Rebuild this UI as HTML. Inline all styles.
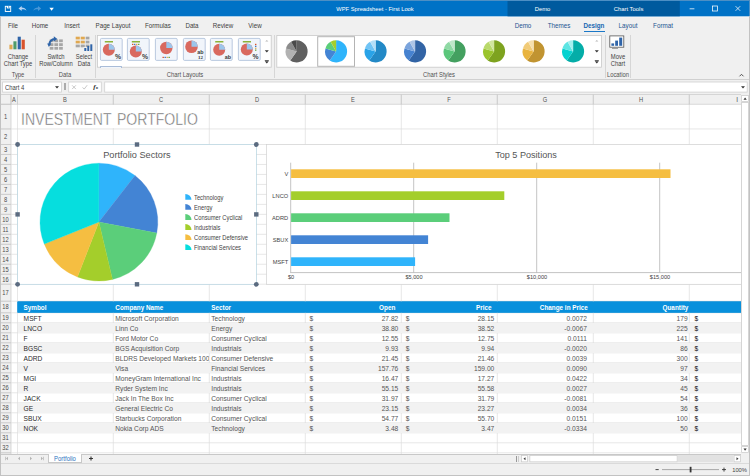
<!DOCTYPE html><html><head><meta charset="utf-8"><title>WPF Spreadsheet - First Look</title><style>
*{margin:0;padding:0;box-sizing:border-box}
html,body{width:750px;height:476px;overflow:hidden;background:#f0f0f0}
body{position:relative;font-family:"Liberation Sans",sans-serif;font-size:6.2px;color:#404040;line-height:1}
.a{position:absolute}
.t{position:absolute;white-space:nowrap;line-height:8px;height:8px}
.c{text-align:center}
.r{text-align:right}
.b{font-weight:bold}
svg{position:absolute;overflow:visible}
</style></head><body>
<svg style="left:0;top:0" width="750" height="20"><rect x="0" y="16" width="750" height="1.400" fill="#f8f8f8"/><rect x="0" y="0" width="750" height="16.300" fill="#0072c6"/><rect x="507.500" y="0" width="172.300" height="16.300" fill="#005a9e"/></svg>
<div class="a" style="left:0.00px;top:0.00px;width:750.00px;height:0.80px;background:#4d8fc4;"></div>
<div class="t c" style="left:275.30px;top:4.60px;width:200.00px;color:#fff;font-size:6.250px;transform:scaleX(0.920)">WPF Spreadsheet - First Look</div>
<div class="t c" style="left:507.50px;top:4.60px;width:70.00px;color:#fff;font-size:5.900px">Demo</div>
<div class="t c" style="left:588.50px;top:4.60px;width:80.00px;color:#fff;font-size:5.900px">Chart Tools</div>
<svg style="left:680px;top:0" width="70" height="17"><g stroke="#fff" stroke-width="0.75" fill="none"><path d="M9.600 8.800h4.800"/><rect x="32.400" y="6" width="5.200" height="5"/><path d="M55.600 6.200l4.600 4.600M60.200 6.200l-4.600 4.600"/></g></svg>
<svg style="left:0;top:0" width="70" height="17"><rect x="5.300" y="6.300" width="5.400" height="5.200" fill="none" stroke="#fff" stroke-width="0.9"/><rect x="6.800" y="6" width="3" height="2.400" fill="#fff"/><rect x="8.300" y="6.300" width="0.800" height="1.400" fill="#0072c6"/><g fill="#b7d3f2"><path d="M18.500 8.500l3.200-2.500v1.500c2.200 0 4 1 4.800 3.300-1.300-1.200-2.800-1.600-4.800-1.500v1.700z"/><path d="M41.200 8.500l-3.200-2.500v1.500c-2.200 0-4 1-4.800 3.300 1.300-1.200 2.800-1.600 4.800-1.500v1.700z" opacity=".4"/></g><path d="M49.400 7.700h4.400l-2.200 3z" fill="#fff"/></svg>
<div class="t c" style="left:-17.00px;top:21.50px;width:60.00px;font-size:6.600px;transform:scaleX(0.940)">File</div>
<div class="t c" style="left:10.30px;top:21.50px;width:60.00px;font-size:6.600px;transform:scaleX(0.940)">Home</div>
<div class="t c" style="left:42.00px;top:21.50px;width:60.00px;font-size:6.600px;transform:scaleX(0.940)">Insert</div>
<div class="t c" style="left:82.50px;top:21.50px;width:60.00px;font-size:6.600px;transform:scaleX(0.940)">Page Layout</div>
<div class="t c" style="left:128.00px;top:21.50px;width:60.00px;font-size:6.600px;transform:scaleX(0.940)">Formulas</div>
<div class="t c" style="left:162.30px;top:21.50px;width:60.00px;font-size:6.600px;transform:scaleX(0.940)">Data</div>
<div class="t c" style="left:193.00px;top:21.50px;width:60.00px;font-size:6.600px;transform:scaleX(0.940)">Review</div>
<div class="t c" style="left:224.50px;top:21.50px;width:60.00px;font-size:6.600px;transform:scaleX(0.940)">View</div>
<div class="t c" style="left:493.30px;top:21.70px;width:60.00px;color:#1d5590;font-size:6.600px;transform:scaleX(0.950)">Demo</div>
<div class="t c" style="left:529.00px;top:21.70px;width:60.00px;color:#1d5590;font-size:6.600px;transform:scaleX(0.950)">Themes</div>
<div class="t c b" style="left:564.00px;top:21.70px;width:60.00px;color:#1566b0;font-size:6.600px;transform:scaleX(0.950)">Design</div>
<div class="t c" style="left:598.30px;top:21.70px;width:60.00px;color:#1d5590;font-size:6.600px;transform:scaleX(0.950)">Layout</div>
<div class="t c" style="left:633.00px;top:21.70px;width:60.00px;color:#1d5590;font-size:6.600px;transform:scaleX(0.950)">Format</div>
<div class="a" style="left:584.00px;top:30.60px;width:20.50px;height:1.00px;background:#1b78c8;"></div>
<div class="a" style="left:35.40px;top:35.00px;width:0.60px;height:42.50px;background:#d6d6d6;"></div>
<div class="a" style="left:95.40px;top:35.00px;width:0.60px;height:42.50px;background:#d6d6d6;"></div>
<div class="a" style="left:604.80px;top:35.00px;width:0.60px;height:42.50px;background:#d6d6d6;"></div>
<div class="a" style="left:629.60px;top:35.00px;width:0.60px;height:42.50px;background:#d6d6d6;"></div>
<div class="a" style="left:273.60px;top:35.00px;width:0.60px;height:42.50px;background:#d6d6d6;"></div>
<div class="a" style="left:0.00px;top:79.00px;width:750.00px;height:0.80px;background:#d0d0d0;"></div>
<div class="t c" style="left:-22.50px;top:70.50px;width:80.00px;color:#505050;font-size:6.500px;transform:scaleX(0.900)">Type</div>
<div class="t c" style="left:25.30px;top:70.50px;width:80.00px;color:#505050;font-size:6.500px;transform:scaleX(0.900)">Data</div>
<div class="t c" style="left:144.50px;top:70.50px;width:80.00px;color:#505050;font-size:6.500px;transform:scaleX(0.900)">Chart Layouts</div>
<div class="t c" style="left:399.00px;top:70.50px;width:80.00px;color:#505050;font-size:6.500px;transform:scaleX(0.900)">Chart Styles</div>
<div class="t c" style="left:577.50px;top:70.50px;width:80.00px;color:#505050;font-size:6.500px;transform:scaleX(0.900)">Location</div>
<svg style="left:738px;top:72px" width="8" height="6"><path d="M1.500 4.300l2-2 2 2" stroke="#404040" stroke-width="0.9" fill="none"/></svg>
<div class="t c" style="left:-12.50px;top:52.60px;width:60.00px;font-size:6.500px;transform:scaleX(0.900)">Change</div>
<div class="t c" style="left:-12.50px;top:59.60px;width:60.00px;font-size:6.500px;transform:scaleX(0.900)">Chart Type</div>
<div class="t c" style="left:25.50px;top:52.60px;width:60.00px;font-size:6.500px;transform:scaleX(0.900)">Switch</div>
<div class="t c" style="left:25.50px;top:59.60px;width:60.00px;font-size:6.500px;transform:scaleX(0.900)">Row/Column</div>
<div class="t c" style="left:53.70px;top:52.60px;width:60.00px;font-size:6.500px;transform:scaleX(0.900)">Select</div>
<div class="t c" style="left:53.70px;top:59.60px;width:60.00px;font-size:6.500px;transform:scaleX(0.900)">Data</div>
<div class="t c" style="left:587.50px;top:52.60px;width:60.00px;font-size:6.500px;transform:scaleX(0.900)">Move</div>
<div class="t c" style="left:587.50px;top:59.60px;width:60.00px;font-size:6.500px;transform:scaleX(0.900)">Chart</div>
<svg style="left:9px;top:36px" width="17" height="15"><rect x="0.400" y="8.700" width="3.100" height="4.600" fill="#e0a850"/><rect x="4.400" y="5.300" width="3.100" height="8" fill="#4f9b6a"/><rect x="8.700" y="0.700" width="3.100" height="12.600" fill="#2f64a8"/><rect x="12.600" y="3.700" width="3.200" height="9.600" fill="#d9532c"/></svg>
<svg style="left:47px;top:36px" width="18" height="15"><rect x="2.7" y="3.4" width="3.700" height="2.800" fill="#a6a6a6"/><rect x="7.4" y="3.4" width="3.700" height="2.800" fill="#a6a6a6"/><rect x="12.1" y="3.4" width="3.700" height="2.800" fill="#a6a6a6"/><rect x="2.7" y="7.2" width="3.700" height="2.800" fill="#a6a6a6"/><rect x="7.4" y="7.2" width="3.700" height="2.800" fill="#a6a6a6"/><rect x="12.1" y="7.2" width="3.700" height="2.800" fill="#a6a6a6"/><rect x="2.7" y="10.9" width="3.700" height="2.800" fill="#a6a6a6"/><rect x="7.4" y="10.9" width="3.700" height="2.800" fill="#a6a6a6"/><rect x="12.1" y="10.9" width="3.700" height="2.800" fill="#a6a6a6"/><path d="M2.200 8.600c.4-3.200 2.600-5.300 5.600-5.600" stroke="#2f64a8" stroke-width="1.900" fill="none"/><path d="M6.800 0.200l3.600 2.700-3.600 2.500z M0.200 7.400l1.700 3.600 2.400-3.400z" fill="#2f64a8"/></svg>
<svg style="left:75px;top:36px" width="19" height="16"><rect x="0.7" y="0.7" width="4.1" height="2.700" fill="#e0a850"/><rect x="5.7" y="0.7" width="4.1" height="2.700" fill="#e0a850"/><rect x="10.7" y="0.7" width="3.7" height="2.700" fill="#a6a6a6"/><rect x="0.7" y="4.7" width="4.1" height="2.700" fill="#e0a850"/><rect x="5.7" y="4.7" width="4.1" height="2.700" fill="#e0a850"/><rect x="10.7" y="4.7" width="3.7" height="2.700" fill="#a6a6a6"/><rect x="0.7" y="8.6" width="4.1" height="2.700" fill="#a6a6a6"/><rect x="5.7" y="8.6" width="4.1" height="2.700" fill="#a6a6a6"/><rect x="10.7" y="8.6" width="3.7" height="2.700" fill="#a6a6a6"/><rect x="8.300" y="11.200" width="4" height="4.200" fill="#f0f0f0"/><rect x="9.300" y="12" width="2" height="3" fill="#2f64a8"/><rect x="12.300" y="10" width="1.900" height="5" fill="#2f64a8"/><rect x="15.300" y="8.300" width="2" height="6.700" fill="#2f64a8"/></svg>
<svg style="left:609px;top:35px" width="17" height="15"><rect x="0.800" y="0.900" width="14" height="11.300" fill="#fff" stroke="#555" stroke-width="0.8"/><rect x="2.400" y="8.400" width="2.700" height="2.400" fill="#2f64a8"/><rect x="6.200" y="5.600" width="2.800" height="5.200" fill="#2f64a8"/><rect x="10.200" y="2.600" width="3" height="8.200" fill="#2f64a8"/><path d="M3 13.500h6" stroke="#999" stroke-width="0.9"/></svg>
<svg style="left:0;top:0" width="750" height="476"><rect x="97.40" y="35.40" width="173.80" height="31.80" rx="0" fill="#fff" stroke="#c8c8c8" stroke-width="0.8"/></svg>
<svg style="left:99.90px;top:38px" width="23" height="23"><rect x="0.400" y="0.400" width="21.800" height="22" rx="1.200" fill="#f1f5fb" stroke="#a9bcd8" stroke-width="0.8"/><circle cx="8.8" cy="11.8" r="6" fill="#d9695f"/><path d="M8.8 11.8V5.800000000000001A6 6 0 0 1 14.8 11.8z" fill="#9cc6ec"/><rect x="4.800000000000001" y="3" width="8.200" height="1.500" fill="#8db33a"/><text x="18" y="20.800" font-size="6.800" font-weight="bold" fill="#3a3a3a" text-anchor="middle" font-family="Liberation Sans, sans-serif">%</text></svg>
<svg style="left:127.48px;top:38px" width="23" height="23"><rect x="0.400" y="0.400" width="21.800" height="22" rx="1.200" fill="#f1f5fb" stroke="#a9bcd8" stroke-width="0.8"/><circle cx="8.8" cy="13.5" r="6" fill="#d9695f"/><path d="M8.8 13.5V7.5A6 6 0 0 1 14.8 13.5z" fill="#9cc6ec"/><rect x="4.800000000000001" y="3" width="8.200" height="1.500" fill="#8db33a"/><rect x="5.0" y="5.800" width="1.400" height="1.200" fill="#d9532c"/><rect x="7.0" y="5.800" width="1.400" height="1.200" fill="#3f78c4"/><rect x="9.0" y="5.800" width="1.400" height="1.200" fill="#e0a850"/><rect x="11.0" y="5.800" width="1.400" height="1.200" fill="#6aa640"/><text x="18" y="20.800" font-size="6.800" font-weight="bold" fill="#3a3a3a" text-anchor="middle" font-family="Liberation Sans, sans-serif">%</text></svg>
<svg style="left:155.06px;top:38px" width="23" height="23"><rect x="0.400" y="0.400" width="21.800" height="22" rx="1.200" fill="#f1f5fb" stroke="#a9bcd8" stroke-width="0.8"/><circle cx="11.3" cy="10" r="6.2" fill="#d9695f"/><path d="M11.3 10V3.8A6.2 6.2 0 0 1 17.5 10z" fill="#9cc6ec"/><rect x="7.5" y="18.800" width="1.400" height="1.200" fill="#d9532c"/><rect x="9.5" y="18.800" width="1.400" height="1.200" fill="#3f78c4"/><rect x="11.5" y="18.800" width="1.400" height="1.200" fill="#e0a850"/><rect x="13.5" y="18.800" width="1.400" height="1.200" fill="#6aa640"/></svg>
<svg style="left:182.64px;top:38px" width="23" height="23"><rect x="0.400" y="0.400" width="21.800" height="22" rx="1.200" fill="#f1f5fb" stroke="#a9bcd8" stroke-width="0.8"/><circle cx="8.5" cy="8.7" r="6.3" fill="#d9695f"/><path d="M8.5 8.7V2.3999999999999995A6.3 6.3 0 0 1 14.8 8.7z" fill="#9cc6ec"/><text x="17.400" y="16" font-size="5.400" font-weight="bold" fill="#3a3a3a" text-anchor="middle" font-family="Liberation Sans, sans-serif">ab</text><text x="17.400" y="20.600" font-size="5" font-weight="bold" fill="#3a3a3a" text-anchor="middle" font-family="Liberation Serif, serif">12</text></svg>
<svg style="left:210.22px;top:38px" width="23" height="23"><rect x="0.400" y="0.400" width="21.800" height="22" rx="1.200" fill="#f1f5fb" stroke="#a9bcd8" stroke-width="0.8"/><circle cx="9.2" cy="11.8" r="6" fill="#d9695f"/><path d="M9.2 11.8V5.800000000000001A6 6 0 0 1 15.2 11.8z" fill="#9cc6ec"/><rect x="5.199999999999999" y="3" width="8.200" height="1.500" fill="#8db33a"/><text x="17.800" y="20.700" font-size="5.400" font-weight="bold" fill="#3a3a3a" text-anchor="middle" font-family="Liberation Sans, sans-serif">ab</text></svg>
<svg style="left:237.80px;top:38px" width="23" height="23"><rect x="0.400" y="0.400" width="21.800" height="22" rx="1.200" fill="#f1f5fb" stroke="#a9bcd8" stroke-width="0.8"/><circle cx="8.8" cy="11.5" r="6" fill="#d9695f"/><path d="M8.8 11.5V5.5A6 6 0 0 1 14.8 11.5z" fill="#9cc6ec"/><rect x="4.800000000000001" y="3" width="8.200" height="1.500" fill="#8db33a"/><rect x="17" y="5.8" width="1.400" height="1.300" fill="#d9532c"/><rect x="17" y="7.7" width="1.400" height="1.300" fill="#3f78c4"/><rect x="17" y="9.6" width="1.400" height="1.300" fill="#e0a850"/><rect x="17" y="11.5" width="1.400" height="1.300" fill="#6aa640"/><text x="17.600" y="21" font-size="6.800" font-weight="bold" fill="#3a3a3a" text-anchor="middle" font-family="Liberation Sans, sans-serif">%</text></svg>
<div class="a" style="left:100.30px;top:65.80px;width:21.80px;height:1.80px;background:#f1f5fb;border:0.8px solid #a9bcd8;border-bottom:none;border-radius:1px 1px 0 0;"></div>
<svg style="left:263px;top:36px" width="8" height="32"><path d="M2.200 5.600l1.600-1.600 1.600 1.600z" fill="#b8b8b8"/><path d="M1.800 14.200h4l-2 2.300z" fill="#333"/><path d="M1.800 25.300h4l-2 2.300z M1.800 24h4v.7h-4z" fill="#333"/></svg>
<svg style="left:0;top:0" width="750" height="476"><rect x="276.80" y="35.40" width="324.80" height="31.80" rx="0" fill="#fff" stroke="#c8c8c8" stroke-width="0.8"/></svg>
<svg style="left:0;top:0" width="750" height="476"><rect x="317.70" y="36.70" width="36.80" height="29.60" rx="0" fill="#fff" stroke="#b4b4b4" stroke-width="1"/></svg>
<svg style="left:0;top:0" width="750" height="80"><path d="M296.60 51.40L296.60 40.35A11.05 11.05 0 1 1 290.26 60.45z" fill="#606060"/><path d="M296.60 51.40L290.26 60.45A11.05 11.05 0 0 1 285.93 48.54z" fill="#b2b2b2"/><path d="M296.60 51.40L285.93 48.54A11.05 11.05 0 0 1 291.08 41.83z" fill="#8c8c8c"/><path d="M296.60 51.40L291.08 41.83A11.05 11.05 0 0 1 296.60 40.35z" fill="#4a4a4a"/><path d="M336.10 51.40L336.10 40.35A11.05 11.05 0 1 1 329.76 60.45z" fill="#2fb4fb"/><path d="M336.10 51.40L329.76 60.45A11.05 11.05 0 0 1 325.43 48.54z" fill="#4384d4"/><path d="M336.10 51.40L325.43 48.54A11.05 11.05 0 0 1 330.58 41.83z" fill="#5bce7a"/><path d="M336.10 51.40L330.58 41.83A11.05 11.05 0 0 1 336.10 40.35z" fill="#a4ce2b"/><path d="M375.60 51.40L375.60 40.35A11.05 11.05 0 1 1 369.26 60.45z" fill="#2389c6"/><path d="M375.60 51.40L369.26 60.45A11.05 11.05 0 0 1 364.93 48.54z" fill="#29a3e8"/><path d="M375.60 51.40L364.93 48.54A11.05 11.05 0 0 1 370.08 41.83z" fill="#71c4f5"/><path d="M375.60 51.40L370.08 41.83A11.05 11.05 0 0 1 375.60 40.35z" fill="#b5dff8"/><path d="M415.10 51.40L415.10 40.35A11.05 11.05 0 1 1 408.76 60.45z" fill="#3264a5"/><path d="M415.10 51.40L408.76 60.45A11.05 11.05 0 0 1 404.43 48.54z" fill="#4682d0"/><path d="M415.10 51.40L404.43 48.54A11.05 11.05 0 0 1 409.58 41.83z" fill="#7ba4dc"/><path d="M415.10 51.40L409.58 41.83A11.05 11.05 0 0 1 415.10 40.35z" fill="#aec5e6"/><path d="M454.60 51.40L454.60 40.35A11.05 11.05 0 1 1 448.26 60.45z" fill="#44a060"/><path d="M454.60 51.40L448.26 60.45A11.05 11.05 0 0 1 443.93 48.54z" fill="#5bc67b"/><path d="M454.60 51.40L443.93 48.54A11.05 11.05 0 0 1 449.08 41.83z" fill="#8fd9a4"/><path d="M454.60 51.40L449.08 41.83A11.05 11.05 0 0 1 454.60 40.35z" fill="#bfe8c9"/><path d="M494.10 51.40L494.10 40.35A11.05 11.05 0 1 1 487.76 60.45z" fill="#7ea31f"/><path d="M494.10 51.40L487.76 60.45A11.05 11.05 0 0 1 483.43 48.54z" fill="#9bc42d"/><path d="M494.10 51.40L483.43 48.54A11.05 11.05 0 0 1 488.58 41.83z" fill="#b9d96b"/><path d="M494.10 51.40L488.58 41.83A11.05 11.05 0 0 1 494.10 40.35z" fill="#d2e69e"/><path d="M533.60 51.40L533.60 40.35A11.05 11.05 0 1 1 527.26 60.45z" fill="#c19431"/><path d="M533.60 51.40L527.26 60.45A11.05 11.05 0 0 1 522.93 48.54z" fill="#e9b43f"/><path d="M533.60 51.40L522.93 48.54A11.05 11.05 0 0 1 528.08 41.83z" fill="#f1cb78"/><path d="M533.60 51.40L528.08 41.83A11.05 11.05 0 0 1 533.60 40.35z" fill="#f7e0ad"/><path d="M573.10 51.40L573.10 40.35A11.05 11.05 0 1 1 566.76 60.45z" fill="#04ada8"/><path d="M573.10 51.40L566.76 60.45A11.05 11.05 0 0 1 562.43 48.54z" fill="#05d2d0"/><path d="M573.10 51.40L562.43 48.54A11.05 11.05 0 0 1 567.58 41.83z" fill="#5ee5e3"/><path d="M573.10 51.40L567.58 41.83A11.05 11.05 0 0 1 573.10 40.35z" fill="#a6f0ef"/></svg>
<svg style="left:593.3px;top:36px" width="8" height="32"><path d="M2.200 5.600l1.600-1.600 1.600 1.600z" fill="#b8b8b8"/><path d="M1.800 14.200h4l-2 2.300z" fill="#333"/><path d="M1.800 25.300h4l-2 2.300z M1.800 24h4v.7h-4z" fill="#333"/></svg>
<div class="a" style="left:0.00px;top:79.80px;width:750.00px;height:14.70px;background:#f0f0f0;"></div>
<svg style="left:0;top:0" width="750" height="476"><rect x="2.60" y="82.00" width="58.80" height="10.10" rx="0" fill="#fff" stroke="#d0d0d0" stroke-width="0.8"/></svg>
<div class="t " style="left:4.70px;top:83.90px;font-size:6.500px;transform-origin:0 50%;transform:scaleX(0.900)">Chart 4</div>
<svg style="left:54.400px;top:85.200px" width="6" height="5"><path d="M1 1.200h4l-2 2.400z" fill="#333"/></svg>
<div class="a" style="left:64.10px;top:83.00px;width:0.60px;height:7.20px;background:#ababab;"></div>
<div class="a" style="left:65.30px;top:83.00px;width:0.60px;height:7.20px;background:#ababab;"></div>
<svg style="left:0;top:0" width="750" height="476"><rect x="68.70" y="82.00" width="32.60" height="10.10" rx="0" fill="#fff" stroke="#d0d0d0" stroke-width="0.8"/></svg>
<svg style="left:69px;top:82px" width="34" height="11"><path d="M3.100 3.300l3.800 3.800M6.900 3.300l-3.800 3.800" stroke="#b0b0b0" stroke-width="0.7" fill="none"/><path d="M13.600 5.400l1.600 1.700 3-3.900" stroke="#b0b0b0" stroke-width="0.7" fill="none"/></svg>
<div class="t" style="left:93.300px;top:83.300px;font:italic bold 7px 'Liberation Serif',serif;color:#222">f<span style="font-size:4.200px;font-style:normal;font-family:'Liberation Sans',sans-serif">x</span></div>
<svg style="left:0;top:0" width="750" height="476"><rect x="104.70" y="82.00" width="642.50" height="10.10" rx="0" fill="#fff" stroke="#d0d0d0" stroke-width="0.8"/></svg>
<svg style="left:739.500px;top:85px" width="6" height="5"><path d="M1 1.200h4l-2 2.400z" fill="#333"/></svg>
<div class="a" style="left:0.00px;top:94.50px;width:741.00px;height:359.80px;background:#fff;"></div>
<div class="a" style="left:0.00px;top:94.50px;width:741.00px;height:9.80px;background:#f0f0f0;"></div>
<div class="a" style="left:0.00px;top:94.50px;width:11.00px;height:359.80px;background:#f0f0f0;"></div>
<div class="a" style="left:17.50px;top:301.20px;width:723.50px;height:11.60px;background:#0e90d8;"></div>
<svg style="left:0;top:0" width="750" height="476" shape-rendering="auto"><path d="M11 94.500V454.3" stroke="#c8c8c8" stroke-width="0.7"/><path d="M11 94.500V104.300" stroke="#c4c4c4" stroke-width="0.7"/><path d="M17.5 94.500V454.3" stroke="#dcdcdc" stroke-width="0.7"/><path d="M17.5 94.500V104.300" stroke="#c4c4c4" stroke-width="0.7"/><path d="M113.3 94.500V454.3" stroke="#dcdcdc" stroke-width="0.7"/><path d="M113.3 94.500V104.300" stroke="#c4c4c4" stroke-width="0.7"/><path d="M209.3 94.500V454.3" stroke="#dcdcdc" stroke-width="0.7"/><path d="M209.3 94.500V104.300" stroke="#c4c4c4" stroke-width="0.7"/><path d="M305.3 94.500V454.3" stroke="#dcdcdc" stroke-width="0.7"/><path d="M305.3 94.500V104.300" stroke="#c4c4c4" stroke-width="0.7"/><path d="M401.3 94.500V454.3" stroke="#dcdcdc" stroke-width="0.7"/><path d="M401.3 94.500V104.300" stroke="#c4c4c4" stroke-width="0.7"/><path d="M497.3 94.500V454.3" stroke="#dcdcdc" stroke-width="0.7"/><path d="M497.3 94.500V104.300" stroke="#c4c4c4" stroke-width="0.7"/><path d="M593.3 94.500V454.3" stroke="#dcdcdc" stroke-width="0.7"/><path d="M593.3 94.500V104.300" stroke="#c4c4c4" stroke-width="0.7"/><path d="M689.3 94.500V454.3" stroke="#dcdcdc" stroke-width="0.7"/><path d="M689.3 94.500V104.300" stroke="#c4c4c4" stroke-width="0.7"/><path d="M0 104.30H741" stroke="#c8c8c8" stroke-width="0.7"/><path d="M0 104.30H11" stroke="#c4c4c4" stroke-width="0.7"/><path d="M0 128.95H741" stroke="#dcdcdc" stroke-width="0.7"/><path d="M0 128.95H11" stroke="#c4c4c4" stroke-width="0.7"/><path d="M0 144.50H741" stroke="#dcdcdc" stroke-width="0.7"/><path d="M0 144.50H11" stroke="#c4c4c4" stroke-width="0.7"/><path d="M0 154.48H741" stroke="#dcdcdc" stroke-width="0.7"/><path d="M0 154.48H11" stroke="#c4c4c4" stroke-width="0.7"/><path d="M0 164.46H741" stroke="#dcdcdc" stroke-width="0.7"/><path d="M0 164.46H11" stroke="#c4c4c4" stroke-width="0.7"/><path d="M0 174.44H741" stroke="#dcdcdc" stroke-width="0.7"/><path d="M0 174.44H11" stroke="#c4c4c4" stroke-width="0.7"/><path d="M0 184.42H741" stroke="#dcdcdc" stroke-width="0.7"/><path d="M0 184.42H11" stroke="#c4c4c4" stroke-width="0.7"/><path d="M0 194.40H741" stroke="#dcdcdc" stroke-width="0.7"/><path d="M0 194.40H11" stroke="#c4c4c4" stroke-width="0.7"/><path d="M0 204.38H741" stroke="#dcdcdc" stroke-width="0.7"/><path d="M0 204.38H11" stroke="#c4c4c4" stroke-width="0.7"/><path d="M0 214.36H741" stroke="#dcdcdc" stroke-width="0.7"/><path d="M0 214.36H11" stroke="#c4c4c4" stroke-width="0.7"/><path d="M0 224.34H741" stroke="#dcdcdc" stroke-width="0.7"/><path d="M0 224.34H11" stroke="#c4c4c4" stroke-width="0.7"/><path d="M0 234.32H741" stroke="#dcdcdc" stroke-width="0.7"/><path d="M0 234.32H11" stroke="#c4c4c4" stroke-width="0.7"/><path d="M0 244.30H741" stroke="#dcdcdc" stroke-width="0.7"/><path d="M0 244.30H11" stroke="#c4c4c4" stroke-width="0.7"/><path d="M0 254.28H741" stroke="#dcdcdc" stroke-width="0.7"/><path d="M0 254.28H11" stroke="#c4c4c4" stroke-width="0.7"/><path d="M0 264.26H741" stroke="#dcdcdc" stroke-width="0.7"/><path d="M0 264.26H11" stroke="#c4c4c4" stroke-width="0.7"/><path d="M0 274.24H741" stroke="#dcdcdc" stroke-width="0.7"/><path d="M0 274.24H11" stroke="#c4c4c4" stroke-width="0.7"/><path d="M0 284.22H741" stroke="#dcdcdc" stroke-width="0.7"/><path d="M0 284.22H11" stroke="#c4c4c4" stroke-width="0.7"/><path d="M0 301.20H741" stroke="#dcdcdc" stroke-width="0.7"/><path d="M0 301.20H11" stroke="#c4c4c4" stroke-width="0.7"/><path d="M0 312.80H741" stroke="#dcdcdc" stroke-width="0.7"/><path d="M0 312.80H11" stroke="#c4c4c4" stroke-width="0.7"/><path d="M0 322.80H741" stroke="#dcdcdc" stroke-width="0.7"/><path d="M0 322.80H11" stroke="#c4c4c4" stroke-width="0.7"/><path d="M0 332.80H741" stroke="#dcdcdc" stroke-width="0.7"/><path d="M0 332.80H11" stroke="#c4c4c4" stroke-width="0.7"/><path d="M0 342.80H741" stroke="#dcdcdc" stroke-width="0.7"/><path d="M0 342.80H11" stroke="#c4c4c4" stroke-width="0.7"/><path d="M0 352.80H741" stroke="#dcdcdc" stroke-width="0.7"/><path d="M0 352.80H11" stroke="#c4c4c4" stroke-width="0.7"/><path d="M0 362.80H741" stroke="#dcdcdc" stroke-width="0.7"/><path d="M0 362.80H11" stroke="#c4c4c4" stroke-width="0.7"/><path d="M0 372.80H741" stroke="#dcdcdc" stroke-width="0.7"/><path d="M0 372.80H11" stroke="#c4c4c4" stroke-width="0.7"/><path d="M0 382.80H741" stroke="#dcdcdc" stroke-width="0.7"/><path d="M0 382.80H11" stroke="#c4c4c4" stroke-width="0.7"/><path d="M0 392.80H741" stroke="#dcdcdc" stroke-width="0.7"/><path d="M0 392.80H11" stroke="#c4c4c4" stroke-width="0.7"/><path d="M0 402.80H741" stroke="#dcdcdc" stroke-width="0.7"/><path d="M0 402.80H11" stroke="#c4c4c4" stroke-width="0.7"/><path d="M0 412.80H741" stroke="#dcdcdc" stroke-width="0.7"/><path d="M0 412.80H11" stroke="#c4c4c4" stroke-width="0.7"/><path d="M0 422.80H741" stroke="#dcdcdc" stroke-width="0.7"/><path d="M0 422.80H11" stroke="#c4c4c4" stroke-width="0.7"/><path d="M0 432.80H741" stroke="#dcdcdc" stroke-width="0.7"/><path d="M0 432.80H11" stroke="#c4c4c4" stroke-width="0.7"/><path d="M0 442.80H741" stroke="#dcdcdc" stroke-width="0.7"/><path d="M0 442.80H11" stroke="#c4c4c4" stroke-width="0.7"/><path d="M0 452.80H741" stroke="#dcdcdc" stroke-width="0.7"/><path d="M0 452.80H11" stroke="#c4c4c4" stroke-width="0.7"/><path d="M0 94.500H741" stroke="#c8c8c8" stroke-width="0.7"/></svg>
<svg style="left:0;top:0" width="750" height="476"><rect x="17.200" y="301.500" width="724" height="11.200" fill="#0890dc"/></svg>
<div class="a" style="left:17.50px;top:322.50px;width:723.70px;height:10.60px;background:#f2f2f2;"></div>
<div class="a" style="left:17.50px;top:342.50px;width:723.70px;height:10.60px;background:#f2f2f2;"></div>
<div class="a" style="left:17.50px;top:362.50px;width:723.70px;height:10.60px;background:#f2f2f2;"></div>
<div class="a" style="left:17.50px;top:382.50px;width:723.70px;height:10.60px;background:#f2f2f2;"></div>
<div class="a" style="left:17.50px;top:402.50px;width:723.70px;height:10.60px;background:#f2f2f2;"></div>
<div class="a" style="left:17.50px;top:422.50px;width:723.70px;height:10.60px;background:#f2f2f2;"></div>
<div class="t c" style="left:4.25px;top:96.00px;width:20.00px;color:#505050;font-size:6.500px;transform:scaleX(0.880)">A</div>
<div class="t c" style="left:55.40px;top:96.00px;width:20.00px;color:#505050;font-size:6.500px;transform:scaleX(0.880)">B</div>
<div class="t c" style="left:151.30px;top:96.00px;width:20.00px;color:#505050;font-size:6.500px;transform:scaleX(0.880)">C</div>
<div class="t c" style="left:247.30px;top:96.00px;width:20.00px;color:#505050;font-size:6.500px;transform:scaleX(0.880)">D</div>
<div class="t c" style="left:343.30px;top:96.00px;width:20.00px;color:#505050;font-size:6.500px;transform:scaleX(0.880)">E</div>
<div class="t c" style="left:439.30px;top:96.00px;width:20.00px;color:#505050;font-size:6.500px;transform:scaleX(0.880)">F</div>
<div class="t c" style="left:535.30px;top:96.00px;width:20.00px;color:#505050;font-size:6.500px;transform:scaleX(0.880)">G</div>
<div class="t c" style="left:631.30px;top:96.00px;width:20.00px;color:#505050;font-size:6.500px;transform:scaleX(0.880)">H</div>
<div class="t c" style="left:727.20px;top:96.00px;width:20.00px;color:#505050;font-size:6.500px">I</div>
<div class="t c" style="left:-0.30px;top:112.92px;width:11.00px;color:#4a4a4a;font-size:6.700px;transform:scaleX(0.860)">1</div>
<div class="t c" style="left:-0.30px;top:133.03px;width:11.00px;color:#4a4a4a;font-size:6.700px;transform:scaleX(0.860)">2</div>
<div class="t c" style="left:-0.30px;top:145.79px;width:11.00px;color:#4a4a4a;font-size:6.700px;transform:scaleX(0.860)">3</div>
<div class="t c" style="left:-0.30px;top:155.77px;width:11.00px;color:#4a4a4a;font-size:6.700px;transform:scaleX(0.860)">4</div>
<div class="t c" style="left:-0.30px;top:165.75px;width:11.00px;color:#4a4a4a;font-size:6.700px;transform:scaleX(0.860)">5</div>
<div class="t c" style="left:-0.30px;top:175.73px;width:11.00px;color:#4a4a4a;font-size:6.700px;transform:scaleX(0.860)">6</div>
<div class="t c" style="left:-0.30px;top:185.71px;width:11.00px;color:#4a4a4a;font-size:6.700px;transform:scaleX(0.860)">7</div>
<div class="t c" style="left:-0.30px;top:195.69px;width:11.00px;color:#4a4a4a;font-size:6.700px;transform:scaleX(0.860)">8</div>
<div class="t c" style="left:-0.30px;top:205.67px;width:11.00px;color:#4a4a4a;font-size:6.700px;transform:scaleX(0.860)">9</div>
<div class="t c" style="left:-0.30px;top:215.65px;width:11.00px;color:#4a4a4a;font-size:6.700px;transform:scaleX(0.860)">10</div>
<div class="t c" style="left:-0.30px;top:225.63px;width:11.00px;color:#4a4a4a;font-size:6.700px;transform:scaleX(0.860)">11</div>
<div class="t c" style="left:-0.30px;top:235.61px;width:11.00px;color:#4a4a4a;font-size:6.700px;transform:scaleX(0.860)">12</div>
<div class="t c" style="left:-0.30px;top:245.59px;width:11.00px;color:#4a4a4a;font-size:6.700px;transform:scaleX(0.860)">13</div>
<div class="t c" style="left:-0.30px;top:255.57px;width:11.00px;color:#4a4a4a;font-size:6.700px;transform:scaleX(0.860)">14</div>
<div class="t c" style="left:-0.30px;top:265.55px;width:11.00px;color:#4a4a4a;font-size:6.700px;transform:scaleX(0.860)">15</div>
<div class="t c" style="left:-0.30px;top:275.53px;width:11.00px;color:#4a4a4a;font-size:6.700px;transform:scaleX(0.860)">16</div>
<div class="t c" style="left:-0.30px;top:289.01px;width:11.00px;color:#4a4a4a;font-size:6.700px;transform:scaleX(0.860)">17</div>
<div class="t c" style="left:-0.30px;top:303.30px;width:11.00px;color:#4a4a4a;font-size:6.700px;transform:scaleX(0.860)">18</div>
<div class="t c" style="left:-0.30px;top:314.10px;width:11.00px;color:#4a4a4a;font-size:6.700px;transform:scaleX(0.860)">19</div>
<div class="t c" style="left:-0.30px;top:324.10px;width:11.00px;color:#4a4a4a;font-size:6.700px;transform:scaleX(0.860)">20</div>
<div class="t c" style="left:-0.30px;top:334.10px;width:11.00px;color:#4a4a4a;font-size:6.700px;transform:scaleX(0.860)">21</div>
<div class="t c" style="left:-0.30px;top:344.10px;width:11.00px;color:#4a4a4a;font-size:6.700px;transform:scaleX(0.860)">22</div>
<div class="t c" style="left:-0.30px;top:354.10px;width:11.00px;color:#4a4a4a;font-size:6.700px;transform:scaleX(0.860)">23</div>
<div class="t c" style="left:-0.30px;top:364.10px;width:11.00px;color:#4a4a4a;font-size:6.700px;transform:scaleX(0.860)">24</div>
<div class="t c" style="left:-0.30px;top:374.10px;width:11.00px;color:#4a4a4a;font-size:6.700px;transform:scaleX(0.860)">25</div>
<div class="t c" style="left:-0.30px;top:384.10px;width:11.00px;color:#4a4a4a;font-size:6.700px;transform:scaleX(0.860)">26</div>
<div class="t c" style="left:-0.30px;top:394.10px;width:11.00px;color:#4a4a4a;font-size:6.700px;transform:scaleX(0.860)">27</div>
<div class="t c" style="left:-0.30px;top:404.10px;width:11.00px;color:#4a4a4a;font-size:6.700px;transform:scaleX(0.860)">28</div>
<div class="t c" style="left:-0.30px;top:414.10px;width:11.00px;color:#4a4a4a;font-size:6.700px;transform:scaleX(0.860)">29</div>
<div class="t c" style="left:-0.30px;top:424.10px;width:11.00px;color:#4a4a4a;font-size:6.700px;transform:scaleX(0.860)">30</div>
<div class="t c" style="left:-0.30px;top:434.10px;width:11.00px;color:#4a4a4a;font-size:6.700px;transform:scaleX(0.860)">31</div>
<div class="t c" style="left:-0.30px;top:444.10px;width:11.00px;color:#4a4a4a;font-size:6.700px;transform:scaleX(0.860)">32</div>
<div class="a" style="left:112.30px;top:104.90px;width:2.00px;height:23.60px;background:#fff;"></div>
<div class="a" style="left:20.800px;top:109px;font-size:16.200px;line-height:20px;color:#6c6c6c;-webkit-text-stroke:0.400px #fff;white-space:nowrap;transform-origin:0 0;transform:scaleX(0.867);word-spacing:2.200px">INVESTMENT PORTFOLIO</div>
<div class="t b" style="left:23.60px;top:304.30px;color:#fff;font-size:6.350px">Symbol</div>
<div class="t b" style="left:115.30px;top:304.30px;color:#fff;font-size:6.350px">Company Name</div>
<div class="t b" style="left:211.30px;top:304.30px;color:#fff;font-size:6.350px">Sector</div>
<div class="t b r" style="left:305.30px;top:304.30px;width:90.00px;color:#fff;font-size:6.350px">Open</div>
<div class="t b r" style="left:401.30px;top:304.30px;width:90.30px;color:#fff;font-size:6.350px">Price</div>
<div class="t b r" style="left:497.30px;top:304.30px;width:90.50px;color:#fff;font-size:6.350px">Change in Price</div>
<div class="t b r" style="left:593.30px;top:304.30px;width:95.00px;color:#fff;font-size:6.350px">Quantity</div>
<div class="t " style="left:23.60px;top:314.70px;font-size:6.650px;color:#2a2a2a">MSFT</div>
<div class="t" style="left:115.300px;top:314.70px;width:94px;overflow:hidden;font-size:6.650px;color:#555">Microsoft Corporation</div>
<div class="t " style="left:211.30px;top:314.70px;font-size:6.650px;color:#555">Technology</div>
<div class="t " style="left:309.60px;top:314.70px;font-size:6.650px;color:#555">$</div>
<div class="t r" style="left:305.30px;top:314.70px;width:93.00px;font-size:6.650px;color:#555">27.82</div>
<div class="t " style="left:405.80px;top:314.70px;font-size:6.650px;color:#555">$</div>
<div class="t r" style="left:401.30px;top:314.70px;width:93.00px;font-size:6.650px;color:#555">28.15</div>
<div class="t r" style="left:497.30px;top:314.70px;width:89.60px;font-size:6.650px;color:#555">0.0072</div>
<div class="t r" style="left:593.30px;top:314.70px;width:94.30px;font-size:6.650px;color:#555">179</div>
<div class="t " style="left:694.60px;top:314.70px;font-size:6.650px;color:#111">$</div>
<div class="t " style="left:23.60px;top:324.70px;font-size:6.650px;color:#2a2a2a">LNCO</div>
<div class="t" style="left:115.300px;top:324.70px;width:94px;overflow:hidden;font-size:6.650px;color:#555">Linn Co</div>
<div class="t " style="left:211.30px;top:324.70px;font-size:6.650px;color:#555">Energy</div>
<div class="t " style="left:309.60px;top:324.70px;font-size:6.650px;color:#555">$</div>
<div class="t r" style="left:305.30px;top:324.70px;width:93.00px;font-size:6.650px;color:#555">38.80</div>
<div class="t " style="left:405.80px;top:324.70px;font-size:6.650px;color:#555">$</div>
<div class="t r" style="left:401.30px;top:324.70px;width:93.00px;font-size:6.650px;color:#555">38.52</div>
<div class="t r" style="left:497.30px;top:324.70px;width:89.60px;font-size:6.650px;color:#555">-0.0067</div>
<div class="t r" style="left:593.30px;top:324.70px;width:94.30px;font-size:6.650px;color:#555">225</div>
<div class="t " style="left:694.60px;top:324.70px;font-size:6.650px;color:#111">$</div>
<div class="t " style="left:23.60px;top:334.70px;font-size:6.650px;color:#2a2a2a">F</div>
<div class="t" style="left:115.300px;top:334.70px;width:94px;overflow:hidden;font-size:6.650px;color:#555">Ford Motor Co</div>
<div class="t " style="left:211.30px;top:334.70px;font-size:6.650px;color:#555">Consumer Cyclical</div>
<div class="t " style="left:309.60px;top:334.70px;font-size:6.650px;color:#555">$</div>
<div class="t r" style="left:305.30px;top:334.70px;width:93.00px;font-size:6.650px;color:#555">12.55</div>
<div class="t " style="left:405.80px;top:334.70px;font-size:6.650px;color:#555">$</div>
<div class="t r" style="left:401.30px;top:334.70px;width:93.00px;font-size:6.650px;color:#555">12.75</div>
<div class="t r" style="left:497.30px;top:334.70px;width:89.60px;font-size:6.650px;color:#555">0.0111</div>
<div class="t r" style="left:593.30px;top:334.70px;width:94.30px;font-size:6.650px;color:#555">141</div>
<div class="t " style="left:694.60px;top:334.70px;font-size:6.650px;color:#111">$</div>
<div class="t " style="left:23.60px;top:344.70px;font-size:6.650px;color:#2a2a2a">BGSC</div>
<div class="t" style="left:115.300px;top:344.70px;width:94px;overflow:hidden;font-size:6.650px;color:#555">BGS Acquisition Corp</div>
<div class="t " style="left:211.30px;top:344.70px;font-size:6.650px;color:#555">Industrials</div>
<div class="t " style="left:309.60px;top:344.70px;font-size:6.650px;color:#555">$</div>
<div class="t r" style="left:305.30px;top:344.70px;width:93.00px;font-size:6.650px;color:#555">9.93</div>
<div class="t " style="left:405.80px;top:344.70px;font-size:6.650px;color:#555">$</div>
<div class="t r" style="left:401.30px;top:344.70px;width:93.00px;font-size:6.650px;color:#555">9.94</div>
<div class="t r" style="left:497.30px;top:344.70px;width:89.60px;font-size:6.650px;color:#555">-0.0020</div>
<div class="t r" style="left:593.30px;top:344.70px;width:94.30px;font-size:6.650px;color:#555">86</div>
<div class="t " style="left:694.60px;top:344.70px;font-size:6.650px;color:#111">$</div>
<div class="t " style="left:23.60px;top:354.70px;font-size:6.650px;color:#2a2a2a">ADRD</div>
<div class="t" style="left:115.300px;top:354.70px;width:94px;overflow:hidden;font-size:6.650px;color:#555">BLDRS Developed Markets 100 ADR</div>
<div class="t " style="left:211.30px;top:354.70px;font-size:6.650px;color:#555">Consumer Defensive</div>
<div class="t " style="left:309.60px;top:354.70px;font-size:6.650px;color:#555">$</div>
<div class="t r" style="left:305.30px;top:354.70px;width:93.00px;font-size:6.650px;color:#555">21.45</div>
<div class="t " style="left:405.80px;top:354.70px;font-size:6.650px;color:#555">$</div>
<div class="t r" style="left:401.30px;top:354.70px;width:93.00px;font-size:6.650px;color:#555">21.46</div>
<div class="t r" style="left:497.30px;top:354.70px;width:89.60px;font-size:6.650px;color:#555">0.0039</div>
<div class="t r" style="left:593.30px;top:354.70px;width:94.30px;font-size:6.650px;color:#555">300</div>
<div class="t " style="left:694.60px;top:354.70px;font-size:6.650px;color:#111">$</div>
<div class="t " style="left:23.60px;top:364.70px;font-size:6.650px;color:#2a2a2a">V</div>
<div class="t" style="left:115.300px;top:364.70px;width:94px;overflow:hidden;font-size:6.650px;color:#555">Visa</div>
<div class="t " style="left:211.30px;top:364.70px;font-size:6.650px;color:#555">Financial Services</div>
<div class="t " style="left:309.60px;top:364.70px;font-size:6.650px;color:#555">$</div>
<div class="t r" style="left:305.30px;top:364.70px;width:93.00px;font-size:6.650px;color:#555">157.76</div>
<div class="t " style="left:405.80px;top:364.70px;font-size:6.650px;color:#555">$</div>
<div class="t r" style="left:401.30px;top:364.70px;width:93.00px;font-size:6.650px;color:#555">159.00</div>
<div class="t r" style="left:497.30px;top:364.70px;width:89.60px;font-size:6.650px;color:#555">0.0090</div>
<div class="t r" style="left:593.30px;top:364.70px;width:94.30px;font-size:6.650px;color:#555">97</div>
<div class="t " style="left:694.60px;top:364.70px;font-size:6.650px;color:#111">$</div>
<div class="t " style="left:23.60px;top:374.70px;font-size:6.650px;color:#2a2a2a">MGI</div>
<div class="t" style="left:115.300px;top:374.70px;width:94px;overflow:hidden;font-size:6.650px;color:#555">MoneyGram International Inc</div>
<div class="t " style="left:211.30px;top:374.70px;font-size:6.650px;color:#555">Industrials</div>
<div class="t " style="left:309.60px;top:374.70px;font-size:6.650px;color:#555">$</div>
<div class="t r" style="left:305.30px;top:374.70px;width:93.00px;font-size:6.650px;color:#555">16.47</div>
<div class="t " style="left:405.80px;top:374.70px;font-size:6.650px;color:#555">$</div>
<div class="t r" style="left:401.30px;top:374.70px;width:93.00px;font-size:6.650px;color:#555">17.27</div>
<div class="t r" style="left:497.30px;top:374.70px;width:89.60px;font-size:6.650px;color:#555">0.0422</div>
<div class="t r" style="left:593.30px;top:374.70px;width:94.30px;font-size:6.650px;color:#555">34</div>
<div class="t " style="left:694.60px;top:374.70px;font-size:6.650px;color:#111">$</div>
<div class="t " style="left:23.60px;top:384.70px;font-size:6.650px;color:#2a2a2a">R</div>
<div class="t" style="left:115.300px;top:384.70px;width:94px;overflow:hidden;font-size:6.650px;color:#555">Ryder System Inc</div>
<div class="t " style="left:211.30px;top:384.70px;font-size:6.650px;color:#555">Industrials</div>
<div class="t " style="left:309.60px;top:384.70px;font-size:6.650px;color:#555">$</div>
<div class="t r" style="left:305.30px;top:384.70px;width:93.00px;font-size:6.650px;color:#555">55.15</div>
<div class="t " style="left:405.80px;top:384.70px;font-size:6.650px;color:#555">$</div>
<div class="t r" style="left:401.30px;top:384.70px;width:93.00px;font-size:6.650px;color:#555">55.58</div>
<div class="t r" style="left:497.30px;top:384.70px;width:89.60px;font-size:6.650px;color:#555">0.0027</div>
<div class="t r" style="left:593.30px;top:384.70px;width:94.30px;font-size:6.650px;color:#555">45</div>
<div class="t " style="left:694.60px;top:384.70px;font-size:6.650px;color:#111">$</div>
<div class="t " style="left:23.60px;top:394.70px;font-size:6.650px;color:#2a2a2a">JACK</div>
<div class="t" style="left:115.300px;top:394.70px;width:94px;overflow:hidden;font-size:6.650px;color:#555">Jack In The Box Inc</div>
<div class="t " style="left:211.30px;top:394.70px;font-size:6.650px;color:#555">Consumer Cyclical</div>
<div class="t " style="left:309.60px;top:394.70px;font-size:6.650px;color:#555">$</div>
<div class="t r" style="left:305.30px;top:394.70px;width:93.00px;font-size:6.650px;color:#555">31.97</div>
<div class="t " style="left:405.80px;top:394.70px;font-size:6.650px;color:#555">$</div>
<div class="t r" style="left:401.30px;top:394.70px;width:93.00px;font-size:6.650px;color:#555">31.79</div>
<div class="t r" style="left:497.30px;top:394.70px;width:89.60px;font-size:6.650px;color:#555">-0.0081</div>
<div class="t r" style="left:593.30px;top:394.70px;width:94.30px;font-size:6.650px;color:#555">54</div>
<div class="t " style="left:694.60px;top:394.70px;font-size:6.650px;color:#111">$</div>
<div class="t " style="left:23.60px;top:404.70px;font-size:6.650px;color:#2a2a2a">GE</div>
<div class="t" style="left:115.300px;top:404.70px;width:94px;overflow:hidden;font-size:6.650px;color:#555">General Electric Co</div>
<div class="t " style="left:211.30px;top:404.70px;font-size:6.650px;color:#555">Industrials</div>
<div class="t " style="left:309.60px;top:404.70px;font-size:6.650px;color:#555">$</div>
<div class="t r" style="left:305.30px;top:404.70px;width:93.00px;font-size:6.650px;color:#555">23.15</div>
<div class="t " style="left:405.80px;top:404.70px;font-size:6.650px;color:#555">$</div>
<div class="t r" style="left:401.30px;top:404.70px;width:93.00px;font-size:6.650px;color:#555">23.27</div>
<div class="t r" style="left:497.30px;top:404.70px;width:89.60px;font-size:6.650px;color:#555">0.0034</div>
<div class="t r" style="left:593.30px;top:404.70px;width:94.30px;font-size:6.650px;color:#555">36</div>
<div class="t " style="left:694.60px;top:404.70px;font-size:6.650px;color:#111">$</div>
<div class="t " style="left:23.60px;top:414.70px;font-size:6.650px;color:#2a2a2a">SBUX</div>
<div class="t" style="left:115.300px;top:414.70px;width:94px;overflow:hidden;font-size:6.650px;color:#555">Starbucks Corporation</div>
<div class="t " style="left:211.30px;top:414.70px;font-size:6.650px;color:#555">Consumer Cyclical</div>
<div class="t " style="left:309.60px;top:414.70px;font-size:6.650px;color:#555">$</div>
<div class="t r" style="left:305.30px;top:414.70px;width:93.00px;font-size:6.650px;color:#555">54.77</div>
<div class="t " style="left:405.80px;top:414.70px;font-size:6.650px;color:#555">$</div>
<div class="t r" style="left:401.30px;top:414.70px;width:93.00px;font-size:6.650px;color:#555">55.70</div>
<div class="t r" style="left:497.30px;top:414.70px;width:89.60px;font-size:6.650px;color:#555">0.0151</div>
<div class="t r" style="left:593.30px;top:414.70px;width:94.30px;font-size:6.650px;color:#555">100</div>
<div class="t " style="left:694.60px;top:414.70px;font-size:6.650px;color:#111">$</div>
<div class="t " style="left:23.60px;top:424.70px;font-size:6.650px;color:#2a2a2a">NOK</div>
<div class="t" style="left:115.300px;top:424.70px;width:94px;overflow:hidden;font-size:6.650px;color:#555">Nokia Corp ADS</div>
<div class="t " style="left:211.30px;top:424.70px;font-size:6.650px;color:#555">Technology</div>
<div class="t " style="left:309.60px;top:424.70px;font-size:6.650px;color:#555">$</div>
<div class="t r" style="left:305.30px;top:424.70px;width:93.00px;font-size:6.650px;color:#555">3.48</div>
<div class="t " style="left:405.80px;top:424.70px;font-size:6.650px;color:#555">$</div>
<div class="t r" style="left:401.30px;top:424.70px;width:93.00px;font-size:6.650px;color:#555">3.47</div>
<div class="t r" style="left:497.30px;top:424.70px;width:89.60px;font-size:6.650px;color:#555">-0.0334</div>
<div class="t r" style="left:593.30px;top:424.70px;width:94.30px;font-size:6.650px;color:#555">50</div>
<div class="t " style="left:694.60px;top:424.70px;font-size:6.650px;color:#111">$</div>
<svg style="left:0;top:0" width="750" height="476"><rect x="17.60" y="144.50" width="238.75" height="139.80" rx="0" fill="#fff" stroke="#b4d3e0" stroke-width="0.7"/></svg>
<svg style="left:0;top:0" width="750" height="476"><path d="M98.90 222.10L98.90 163.20A58.9 58.9 0 0 1 135.02 175.58z" fill="#2fb4fb" stroke="#2fb4fb" stroke-width="0.3"/><path d="M98.90 222.10L135.02 175.58A58.9 58.9 0 0 1 156.77 233.06z" fill="#4384d4" stroke="#4384d4" stroke-width="0.3"/><path d="M98.90 222.10L156.77 233.06A58.9 58.9 0 0 1 112.50 279.41z" fill="#5bce7a" stroke="#5bce7a" stroke-width="0.3"/><path d="M98.90 222.10L112.50 279.41A58.9 58.9 0 0 1 77.46 276.96z" fill="#a4ce2b" stroke="#a4ce2b" stroke-width="0.3"/><path d="M98.90 222.10L77.46 276.96A58.9 58.9 0 0 1 44.26 244.10z" fill="#f5be41" stroke="#f5be41" stroke-width="0.3"/><path d="M98.90 222.10L44.26 244.10A58.9 58.9 0 0 1 98.90 163.20z" fill="#06dede" stroke="#06dede" stroke-width="0.3"/><path d="M185.300 199.80v-5.800a6.200 5.800 0 0 1 6.200 5.800z" fill="#2fb4fb"/><path d="M185.300 209.84v-5.800a6.200 5.800 0 0 1 6.200 5.800z" fill="#4384d4"/><path d="M185.300 219.88v-5.800a6.200 5.800 0 0 1 6.200 5.800z" fill="#5bce7a"/><path d="M185.300 229.92v-5.800a6.200 5.800 0 0 1 6.200 5.800z" fill="#a4ce2b"/><path d="M185.300 239.96v-5.800a6.200 5.800 0 0 1 6.200 5.800z" fill="#f5be41"/><path d="M185.300 250.00v-5.800a6.200 5.800 0 0 1 6.200 5.800z" fill="#06dede"/><circle cx="17.6" cy="144.5" r="2.400" fill="#5b6b80"/><circle cx="256.3" cy="144.5" r="2.400" fill="#5b6b80"/><circle cx="17.6" cy="284.3" r="2.400" fill="#5b6b80"/><circle cx="256.3" cy="284.3" r="2.400" fill="#5b6b80"/><rect x="134.8" y="142.3" width="4.400" height="4.400" fill="#5b6b80"/><rect x="134.8" y="282.1" width="4.400" height="4.400" fill="#5b6b80"/><rect x="15.4" y="212.2" width="4.400" height="4.400" fill="#5b6b80"/><rect x="254.1" y="212.2" width="4.400" height="4.400" fill="#5b6b80"/></svg>
<div class="t c" style="left:17.2px;top:148.600px;width:239.45px;font-size:9.200px;line-height:12px;height:12px;color:#555">Portfolio Sectors</div>
<div class="t " style="left:193.70px;top:193.50px;color:#444;font-size:6.300px;transform-origin:0 50%;transform:scaleX(0.920)">Technology</div>
<div class="t " style="left:193.70px;top:203.54px;color:#444;font-size:6.300px;transform-origin:0 50%;transform:scaleX(0.920)">Energy</div>
<div class="t " style="left:193.70px;top:213.58px;color:#444;font-size:6.300px;transform-origin:0 50%;transform:scaleX(0.920)">Consumer Cyclical</div>
<div class="t " style="left:193.70px;top:223.62px;color:#444;font-size:6.300px;transform-origin:0 50%;transform:scaleX(0.920)">Industrials</div>
<div class="t " style="left:193.70px;top:233.66px;color:#444;font-size:6.300px;transform-origin:0 50%;transform:scaleX(0.920)">Consumer Defensive</div>
<div class="t " style="left:193.70px;top:243.70px;color:#444;font-size:6.300px;transform-origin:0 50%;transform:scaleX(0.920)">Financial Services</div>
<svg style="left:0;top:0" width="750" height="476"><rect x="266.60" y="144.40" width="489.30" height="139.90" rx="0" fill="#fff" stroke="#d2d2d2" stroke-width="0.7"/></svg>
<svg style="left:0;top:0" width="750" height="476"><path d="M413.7 162.700V272.700" stroke="#b4b4b4" stroke-width="0.8"/><path d="M536.7 162.700V272.700" stroke="#b4b4b4" stroke-width="0.8"/><path d="M659.7 162.700V272.700" stroke="#b4b4b4" stroke-width="0.8"/><path d="M290.7 162.700V272.700" stroke="#b4b4b4" stroke-width="0.8"/><path d="M290.3 272.600H741" stroke="#b4b4b4" stroke-width="0.8"/><rect x="291.09999999999997" y="169.3" width="379.4" height="8.700" fill="#f5be41"/><rect x="291.09999999999997" y="191.3" width="213.2" height="8.700" fill="#a4ce2b"/><rect x="291.09999999999997" y="213.3" width="158.4" height="8.700" fill="#5bce7a"/><rect x="291.09999999999997" y="235.3" width="137.0" height="8.700" fill="#4384d4"/><rect x="291.09999999999997" y="257.3" width="124.0" height="8.700" fill="#2fb4fb"/></svg>
<div class="t r" style="left:240.00px;top:170.05px;width:48.20px;color:#444;font-size:6.200px;transform-origin:100% 50%;transform:scaleX(0.920)">V</div>
<div class="t r" style="left:240.00px;top:192.05px;width:48.20px;color:#444;font-size:6.200px;transform-origin:100% 50%;transform:scaleX(0.920)">LNCO</div>
<div class="t r" style="left:240.00px;top:214.05px;width:48.20px;color:#444;font-size:6.200px;transform-origin:100% 50%;transform:scaleX(0.920)">ADRD</div>
<div class="t r" style="left:240.00px;top:236.05px;width:48.20px;color:#444;font-size:6.200px;transform-origin:100% 50%;transform:scaleX(0.920)">SBUX</div>
<div class="t r" style="left:240.00px;top:258.05px;width:48.20px;color:#444;font-size:6.200px;transform-origin:100% 50%;transform:scaleX(0.920)">MSFT</div>
<div class="t c" style="left:260.70px;top:273.40px;width:60.00px;color:#444;font-size:6.100px;transform:scaleX(0.920)">$0</div>
<div class="t c" style="left:383.70px;top:273.40px;width:60.00px;color:#444;font-size:6.100px;transform:scaleX(0.920)">$5,000</div>
<div class="t c" style="left:506.70px;top:273.40px;width:60.00px;color:#444;font-size:6.100px;transform:scaleX(0.920)">$10,000</div>
<div class="t c" style="left:629.70px;top:273.40px;width:60.00px;color:#444;font-size:6.100px;transform:scaleX(0.920)">$15,000</div>
<div class="t c" style="left:466px;top:149px;width:120px;font-size:9.100px;line-height:12px;height:12px;color:#555">Top 5 Positions</div>
<div class="a" style="left:741.00px;top:94.50px;width:8.20px;height:360.00px;background:#f0f0f0;"></div>
<svg style="left:0;top:0" width="750" height="476"><rect x="741.65" y="102.55" width="6.70" height="342.80" rx="0" fill="#fff" stroke="#c8c8c8" stroke-width="0.7"/></svg>
<svg style="left:0;top:0" width="750" height="476"><rect x="741.65" y="95.55" width="6.70" height="5.90" rx="0" fill="#fff" stroke="#c8c8c8" stroke-width="0.7"/></svg>
<svg style="left:0;top:0" width="750" height="476"><rect x="741.65" y="446.65" width="6.70" height="5.90" rx="0" fill="#fff" stroke="#c8c8c8" stroke-width="0.7"/></svg>
<svg style="left:741px;top:94px" width="9" height="362"><path d="M2.500 5.800h3.200l-1.600-2.200z" fill="#333"/><path d="M2.500 354.600h3.200l-1.600 2.200z" fill="#333"/></svg>
<div class="a" style="left:0.00px;top:454.30px;width:750.00px;height:9.00px;background:#f0f0f0;"></div>
<div class="a" style="left:0.00px;top:454.10px;width:741.00px;height:0.70px;background:#c8c8c8;"></div>
<div class="a" style="left:48.40px;top:454.10px;width:34.00px;height:8.60px;background:#fff;border:0.7px solid #c8c8c8;border-top:none;"></div>
<div class="t c" style="left:48.40px;top:454.50px;width:34.00px;color:#2a72c0;font-size:6.400px;transform:scaleX(0.930)">Portfolio</div>
<svg style="left:0;top:454px" width="100" height="10"><g fill="#b4b4b4"><path d="M8 2.800l-2 1.700 2 1.700z M5.200 2.800h.7v3.400h-.7z"/><path d="M20 2.800l-2 1.700 2 1.700z"/><path d="M30 2.800l2 1.700-2 1.700z"/><path d="M41 2.800l2 1.700-2 1.700z M43.200 2.800h.7v3.400h-.7z"/></g><path d="M89 4.500h4M91 2.500v4" stroke="#333" stroke-width="1.100"/></svg>
<div class="a" style="left:516.30px;top:455.50px;width:0.80px;height:6.50px;background:#999;"></div>
<div class="a" style="left:518.00px;top:455.50px;width:0.80px;height:6.50px;background:#ccc;"></div>
<svg style="left:0;top:0" width="750" height="476"><rect x="521.35" y="455.55" width="6.30" height="6.30" rx="0" fill="#fff" stroke="#c8c8c8" stroke-width="0.7"/></svg>
<svg style="left:0;top:0" width="750" height="476"><rect x="529.85" y="455.55" width="147.30" height="6.30" rx="0" fill="#fff" stroke="#c8c8c8" stroke-width="0.7"/></svg>
<div class="a" style="left:677.50px;top:455.20px;width:55.50px;height:7.00px;background:#e2e2e2;"></div>
<svg style="left:0;top:0" width="750" height="476"><rect x="734.05" y="455.55" width="6.30" height="6.30" rx="0" fill="#fff" stroke="#c8c8c8" stroke-width="0.7"/></svg>
<svg style="left:520px;top:455px" width="222" height="8"><path d="M5.500 2.200v3l-2-1.500z" fill="#333"/><path d="M216.500 2.200v3l2-1.500z" fill="#333"/></svg>
<div class="a" style="left:0.00px;top:463.20px;width:750.00px;height:0.60px;background:#dadada;"></div>
<svg style="left:650px;top:464px" width="100" height="12"><path d="M5.500 5.600h3.200" stroke="#333" stroke-width="0.9"/><path d="M12 5.600h57" stroke="#777" stroke-width="0.6"/><rect x="39.700" y="2.800" width="1.800" height="5.600" fill="#333"/><path d="M72 5.600h4M74 3.600v4" stroke="#333" stroke-width="0.9"/></svg>
<div class="t r" style="left:730.00px;top:465.60px;width:17.00px;color:#444;font-size:5.800px">100%</div>
<div class="a" style="left:0.00px;top:16.20px;width:0.80px;height:460.00px;background:#c2c2c2;"></div>
<div class="a" style="left:749.20px;top:16.20px;width:0.80px;height:460.00px;background:#c2c2c2;"></div>
<div class="a" style="left:0.00px;top:475.20px;width:750.00px;height:0.80px;background:#c2c2c2;"></div>
<div class="a" style="left:749.20px;top:0.00px;width:0.80px;height:16.20px;background:#4d8fc4;"></div>
</body></html>
